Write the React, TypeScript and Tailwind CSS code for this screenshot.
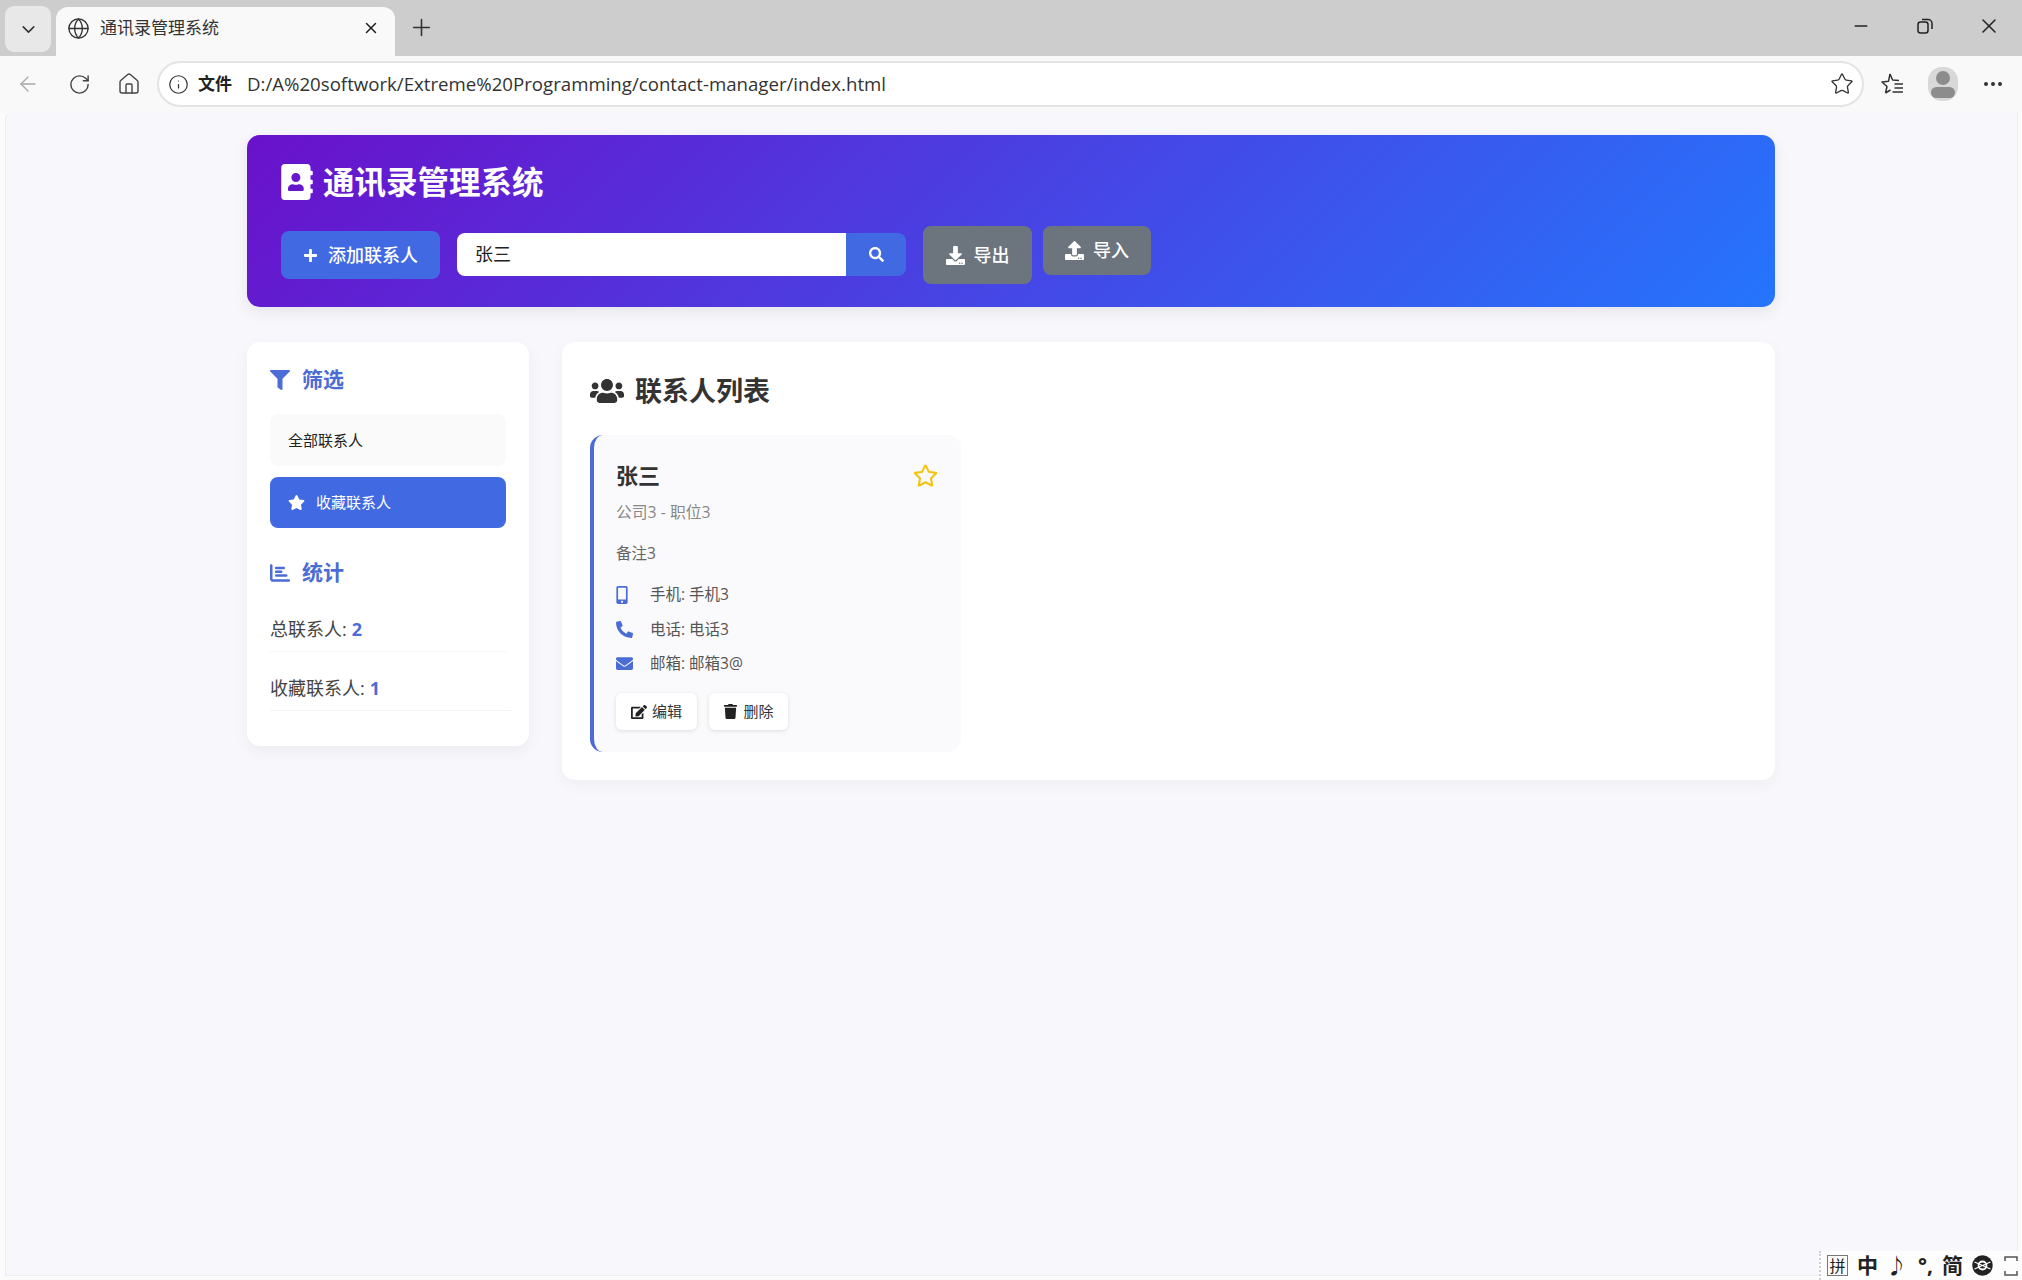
import {
  ArrowLeft,
  ChevronDown,
  Ellipsis,
  Globe,
  House,
  Info,
  Minus,
  Plus,
  RotateCw,
  Star,
  X,
} from "lucide-react";
import {
  FaAddressBook,
  FaDownload,
  FaEdit,
  FaEnvelope,
  FaFilter,
  FaMobileAlt,
  FaPhoneAlt,
  FaPlus,
  FaRegStar,
  FaSearch,
  FaStar,
  FaTrash,
  FaUpload,
  FaUsers,
} from "react-icons/fa";
import { FaChartBar } from "react-icons/fa6";

function TabStrip() {
  return (
    <div className="flex h-[56px] shrink-0 items-start bg-[#cdcdcd] pl-[5px]">
      <div className="mt-[6px] flex h-[46px] w-[46px] items-center justify-center rounded-[9px] bg-[#e8e8e8]">
        <ChevronDown size={21} strokeWidth={1.8} className="text-[#333]" />
      </div>
      <div className="ml-[5px] mt-[7px] flex h-[49px] w-[339px] items-center rounded-t-[12px] bg-[#f9f9f9] pb-[7px] pl-[11px] pr-[15px]">
        <Globe size={23} strokeWidth={1.4} className="text-[#333]" />
        <span className="ml-[10px] flex-1 text-[17px] text-[#333]">通讯录管理系统</span>
        <X size={18} strokeWidth={2} className="text-[#222]" />
      </div>
      <Plus size={27} strokeWidth={1.4} className="ml-[13px] mt-[14px] text-[#333]" />
      <div className="ml-auto mt-[14px] flex items-center pr-[21px]">
        <Minus size={20} strokeWidth={1.6} className="text-[#222]" />
        <svg width="18" height="18" viewBox="0 0 18 18" fill="none" stroke="#222" strokeWidth="1.5" className="ml-[45px]">
          <rect x="2" y="5" width="10" height="11" rx="2.5" />
          <path d="M6 2.5h6a4 4 0 0 1 4 4V12" />
        </svg>
        <X size={24} strokeWidth={1.5} className="ml-[43px] text-[#222]" />
      </div>
    </div>
  );
}

function Toolbar() {
  return (
    <div className="flex h-[56px] shrink-0 items-center bg-[#f9f9f9] pl-[16px]">
      <ArrowLeft size={24} strokeWidth={1.3} className="text-[#a8a8a8]" />
      <RotateCw size={23} strokeWidth={1.5} className="ml-[28px] text-[#444]" />
      <House size={24} strokeWidth={1.4} className="ml-[26px] text-[#444]" />
      <div className="ml-[16px] flex h-[46px] w-[1707px] items-center rounded-full border-2 border-[#e4e4e4] bg-white pl-[9px] pr-[8px]">
        <Info size={21} strokeWidth={1.4} className="text-[#333]" />
        <span className="ml-[9px] text-[17px] font-bold text-[#222]">文件</span>
        <span className="ml-[15px] flex-1 text-[18.65px] text-[#333]">
          D:/A%20softwork/Extreme%20Programming/contact-manager/index.html
        </span>
        <Star size={24} strokeWidth={1.3} className="text-[#333]" />
      </div>
      <svg width="26" height="26" viewBox="0 0 26 26" fill="none" stroke="#333" strokeWidth="1.5" className="ml-[15px]">
        <path d="M11 3l2.6 6 6.4.5M6.5 22l1.5-6.5L3 11l6.5-.8L11 3M6.5 22l5-3" strokeLinejoin="round" />
        <path d="M15.5 13H24M15.5 17H24M13.5 21H24" />
      </svg>
      <div className="ml-[23px] flex h-[34px] w-[30px] flex-col items-center justify-center overflow-hidden rounded-[14px] bg-[#d8d8d8]">
        <div className="h-[14px] w-[14px] rounded-full bg-[#8c8c8c]" />
        <div className="mt-[2px] h-[11px] w-[24px] rounded-full bg-[#8c8c8c]" />
      </div>
      <Ellipsis size={24} strokeWidth={2} className="ml-[23px] text-[#333]" />
    </div>
  );
}

function Header() {
  return (
    <div className="h-[172px] rounded-[13px] bg-[linear-gradient(135deg,#6a11cb_0%,#2575fc_100%)] pl-[34px] pt-[30px] shadow-[0_5px_16px_rgba(0,0,0,0.08)]">
      <div className="flex h-[33px] items-center text-white">
        <FaAddressBook size={36} className="-ml-[2px] -mr-[2px]" />
        <h1 className="ml-[10px] text-[31.5px] font-bold">通讯录管理系统</h1>
      </div>
      <div className="flex items-start text-white">
        <button className="mt-[33px] flex h-[48px] w-[159px] items-center justify-center rounded-[8px] bg-[#4169e1] text-[18px] font-medium">
          <FaPlus size={15} className="mr-[10px]" />
          添加联系人
        </button>
        <div className="ml-[17px] mt-[35px] flex h-[43px] w-[449px]">
          <div className="flex w-[389px] items-center rounded-l-[8px] bg-white pl-[18px] text-[18px] text-[#222]">张三</div>
          <button className="flex w-[60px] items-center justify-center rounded-r-[8px] bg-[#4169e1]">
            <FaSearch size={15} />
          </button>
        </div>
        <button className="ml-[17px] mt-[28px] flex h-[58px] w-[109px] items-center justify-center rounded-[8px] bg-[#6c757d] text-[18px] font-medium">
          <FaDownload size={19} className="mr-[9px]" />
          导出
        </button>
        <button className="ml-[11px] mt-[28px] flex h-[49px] w-[108px] items-center justify-center rounded-[8px] bg-[#6c757d] text-[18px] font-medium">
          <FaUpload size={19} className="mr-[9px]" />
          导入
        </button>
      </div>
    </div>
  );
}

function Sidebar() {
  return (
    <aside className="h-[404px] w-[282px] shrink-0 rounded-[13px] bg-white pl-[23px] pr-[22px] pt-[25px] shadow-[0_5px_16px_rgba(0,0,0,0.05)]">
      <h3 className="flex h-[26px] items-center text-[21px] font-bold text-[#4a6cd4]">
        <FaFilter size={20} />
        <span className="ml-[12px]">筛选</span>
      </h3>
      <div className="mt-[21px] flex h-[52px] w-[236px] items-center rounded-[8px] bg-[#fafafa] pl-[18px] text-[15px] text-[#222]">
        全部联系人
      </div>
      <div className="mt-[11px] flex h-[51px] w-[236px] items-center rounded-[8px] bg-[#4169e1] pl-[18px] text-[15px] text-white">
        <FaStar size={17} />
        <span className="ml-[11px]">收藏联系人</span>
      </div>
      <h3 className="mt-[32px] flex h-[26px] items-center text-[21px] font-bold text-[#4a6cd4]">
        <FaChartBar size={20} />
        <span className="ml-[12px]">统计</span>
      </h3>
      <div className="mt-[31px] flex h-[35px] w-[236px] items-start border-b border-[#f6f6f6] text-[18px] leading-[24px] text-[#444]">
        总联系人:<span className="ml-[5px] font-bold text-[#4a6cd4]">2</span>
      </div>
      <div className="mt-[24px] flex h-[35px] w-[241px] items-start border-b border-[#f4f4f4] text-[18px] leading-[24px] text-[#444]">
        收藏联系人:<span className="ml-[5px] font-bold text-[#4a6cd4]">1</span>
      </div>
    </aside>
  );
}

function ContactCard() {
  const rows = [
    { icon: <FaMobileAlt size={18} className="-ml-[3px]" />, text: "手机: 手机3", h: "h-[34px]" },
    { icon: <FaPhoneAlt size={17} />, text: "电话: 电话3", h: "h-[35px]" },
    { icon: <FaEnvelope size={17} />, text: "邮箱: 邮箱3@", h: "h-[33px]" },
  ];
  return (
    <div className="h-[317px] w-[371px] rounded-[13px] border-l-[4px] border-[#4a6cd4] bg-[#fafafc] pl-[22px] pr-[23px] pt-[24px]">
      <div className="flex h-[32px] items-center justify-between">
        <span className="text-[22px] font-bold text-[#333]">张三</span>
        <FaRegStar size={25} className="text-[#f1c40f]" />
      </div>
      <div className="mt-[9px] text-[15.8px] leading-[24px] text-[#888]">公司3 - 职位3</div>
      <div className="mt-[17px] text-[15.5px] leading-[24px] text-[#666]">备注3</div>
      <div className="mt-[13px]">
        {rows.map((row) => (
          <div key={row.text} className={`flex items-center text-[15.5px] text-[#555] ${row.h}`}>
            <span className="flex w-[34px] text-[#4a6cd4]">{row.icon}</span>
            {row.text}
          </div>
        ))}
      </div>
      <div className="mt-[13px] flex gap-[12px] text-[15px] text-[#333]">
        <button className="flex h-[37px] w-[81px] items-center justify-center rounded-[6px] bg-white shadow-[0_1px_4px_rgba(0,0,0,0.12)]">
          <FaEdit size={16} className="mr-[5px] text-[#222]" />
          编辑
        </button>
        <button className="flex h-[37px] w-[79px] items-center justify-center rounded-[6px] bg-white shadow-[0_1px_4px_rgba(0,0,0,0.12)]">
          <FaTrash size={15} className="mr-[5px] text-[#222]" />
          删除
        </button>
      </div>
    </div>
  );
}

function ImeBar() {
  return (
    <div className="absolute bottom-0 right-0 flex h-[29px] w-[203px] items-center border-l-2 border-dotted border-[#cfcfcf] bg-[#fdfdfd] pl-[6px] text-[21px] font-bold leading-none text-[#222]">
      <span className="flex h-[21px] w-[21px] items-center justify-center border border-[#777] text-[16px] font-normal">拼</span>
      <span className="ml-[9px]">中</span>
      <span className="ml-[8px]">♪</span>
      <span className="ml-[11px]">°,</span>
      <span className="ml-[9px]">简</span>
      <svg width="25" height="25" viewBox="0 0 22 22" className="ml-[7px]">
        <circle cx="11" cy="11" r="9" fill="#222" />
        <circle cx="11" cy="11" r="3.5" fill="none" stroke="#fff" strokeWidth="1.6" />
        <path d="M4 8l14 6M4 14l14-6" stroke="#fff" strokeWidth="1" />
      </svg>
      <svg width="14" height="22" viewBox="0 0 14 22" fill="none" stroke="#555" strokeWidth="1.5" className="ml-[9px]">
        <path d="M1 6V2h12v4M1 16v4h12v-4" />
      </svg>
    </div>
  );
}

export default function App() {
  return (
    <div className="relative flex h-[1280px] w-[2022px] flex-col overflow-hidden bg-[#fbfbfb] font-['Open_Sans','Noto_Sans_CJK_SC',sans-serif]">
      <TabStrip />
      <Toolbar />
      <div className="flex flex-1 flex-col pb-[4px] pl-[5px] pr-[4px]">
        <main className="flex-1 rounded-tl-[8px] border border-t-0 border-[#ececf1] bg-[#f7f7fc] pl-[241px] pt-[23px]">
          <div className="w-[1528px]">
            <Header />
            <div className="mt-[35px] flex items-start gap-[33px]">
              <Sidebar />
              <section className="h-[438px] flex-1 rounded-[13px] bg-white pl-[28px] pt-[32px] shadow-[0_5px_16px_rgba(0,0,0,0.04)]">
                <h2 className="flex h-[34px] items-center text-[27px] font-bold text-[#333]">
                  <FaUsers size={34} />
                  <span className="ml-[11px]">联系人列表</span>
                </h2>
                <div className="mt-[27px]">
                  <ContactCard />
                </div>
              </section>
            </div>
          </div>
        </main>
      </div>
      <ImeBar />
    </div>
  );
}
